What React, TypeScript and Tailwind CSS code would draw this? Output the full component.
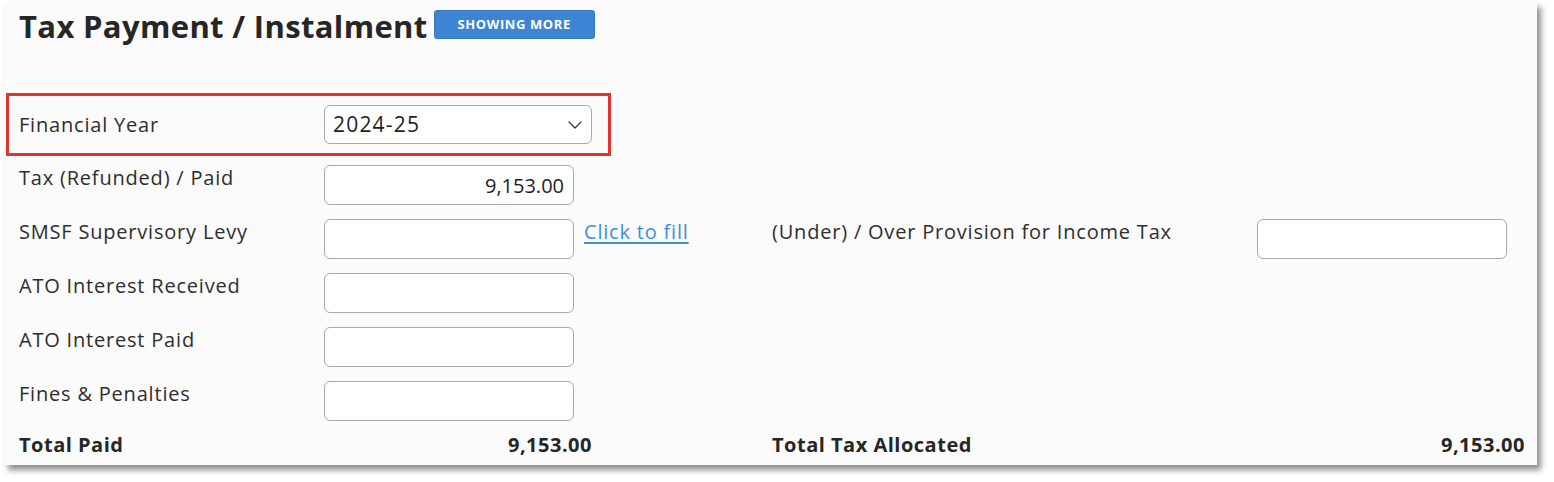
import { ChevronDown } from "lucide-react";

type Row = {
  label: string;
  value?: string;
  link?: string;
  rightLabel?: string;
};

const rows: Row[] = [
  { label: "Tax (Refunded) / Paid", value: "9,153.00" },
  {
    label: "SMSF Supervisory Levy",
    link: "Click to fill",
    rightLabel: "(Under) / Over Provision for Income Tax",
  },
  { label: "ATO Interest Received" },
  { label: "ATO Interest Paid" },
  { label: "Fines & Penalties" },
];

function Field({ value }: { value?: string }) {
  return (
    <input
      type="text"
      defaultValue={value ?? ""}
      className="w-[250px] h-[40px] rounded-[6px] border border-[#a9a9a9] bg-white px-[9px] text-right text-[20px] text-[#1e1e1e] outline-none"
    />
  );
}

export default function App() {
  return (
    <div
      className="min-h-screen bg-white pt-[2px] pl-[4px]"
      style={{ fontFamily: "'Open Sans', Lato, sans-serif" }}
    >
      <div className="w-[1533px] h-[463px] bg-[#fbfbfb] shadow-[4px_5px_6px_rgba(0,0,0,0.45)] text-[#2e2e2e]">
        {/* Header */}
        <div className="flex items-center gap-[6px] pl-[15px] pt-[5px] h-[42px]">
          <h1 className="text-[31px] leading-[36px] font-bold text-[#262626] tracking-[0.35px]">
            Tax Payment / Instalment
          </h1>
          <button className="mt-[-2px] w-[161px] h-[29px] rounded-[3px] bg-[#3d84d2] border border-[#3677c0] text-white text-[13px] font-bold tracking-[0.6px]">
            SHOWING MORE
          </button>
        </div>

        {/* Financial year, highlighted */}
        <div className="mt-[49px] ml-[2px] w-[605px] h-[63px] border-[3px] border-[#e0352b] flex items-center pl-[10px]">
          <span className="w-[305px] text-[20px] leading-[26px] tracking-[0.8px]">Financial Year</span>
          <div className="relative w-[268px] h-[39px] rounded-[6px] border border-[#a9a9a9] bg-white flex items-center pl-[8px]">
            <span className="text-[21px] tracking-[1.2px] text-[#1e1e1e]">2024-25</span>
            <ChevronDown
              size={24}
              strokeWidth={1.2}
              className="absolute right-[4px] top-[7px] text-[#333]"
            />
          </div>
        </div>

        {/* Input rows */}
        <div className="mt-[9px] pl-[15px] flex flex-col gap-[14px]">
          {rows.map((r) => (
            <div key={r.label} className="flex items-start">
              <span className="w-[305px] text-[20px] leading-[26px] tracking-[0.8px]">{r.label}</span>
              <Field value={r.value} />
              <div className="w-[198px] pl-[10px]">
                {r.link && (
                  <a
                    href="#"
                    className="text-[20px] leading-[26px] tracking-[0.8px] text-[#3d8fe0] underline underline-offset-[3px]"
                  >
                    {r.link}
                  </a>
                )}
              </div>
              {r.rightLabel && (
                <>
                  <span className="w-[485px] text-[20px] leading-[26px] tracking-[0.8px]">{r.rightLabel}</span>
                  <Field />
                </>
              )}
            </div>
          ))}
        </div>

        {/* Totals */}
        <div className="mt-[11px] pl-[15px] flex items-center text-[20px] leading-[26px] font-bold tracking-[0.5px] text-[#262626]">
          <div className="w-[573px] flex justify-between">
            <span>Total Paid</span>
            <span>9,153.00</span>
          </div>
          <div className="w-[180px]" />
          <div className="w-[753px] flex justify-between">
            <span>Total Tax Allocated</span>
            <span>9,153.00</span>
          </div>
        </div>
      </div>
    </div>
  );
}
